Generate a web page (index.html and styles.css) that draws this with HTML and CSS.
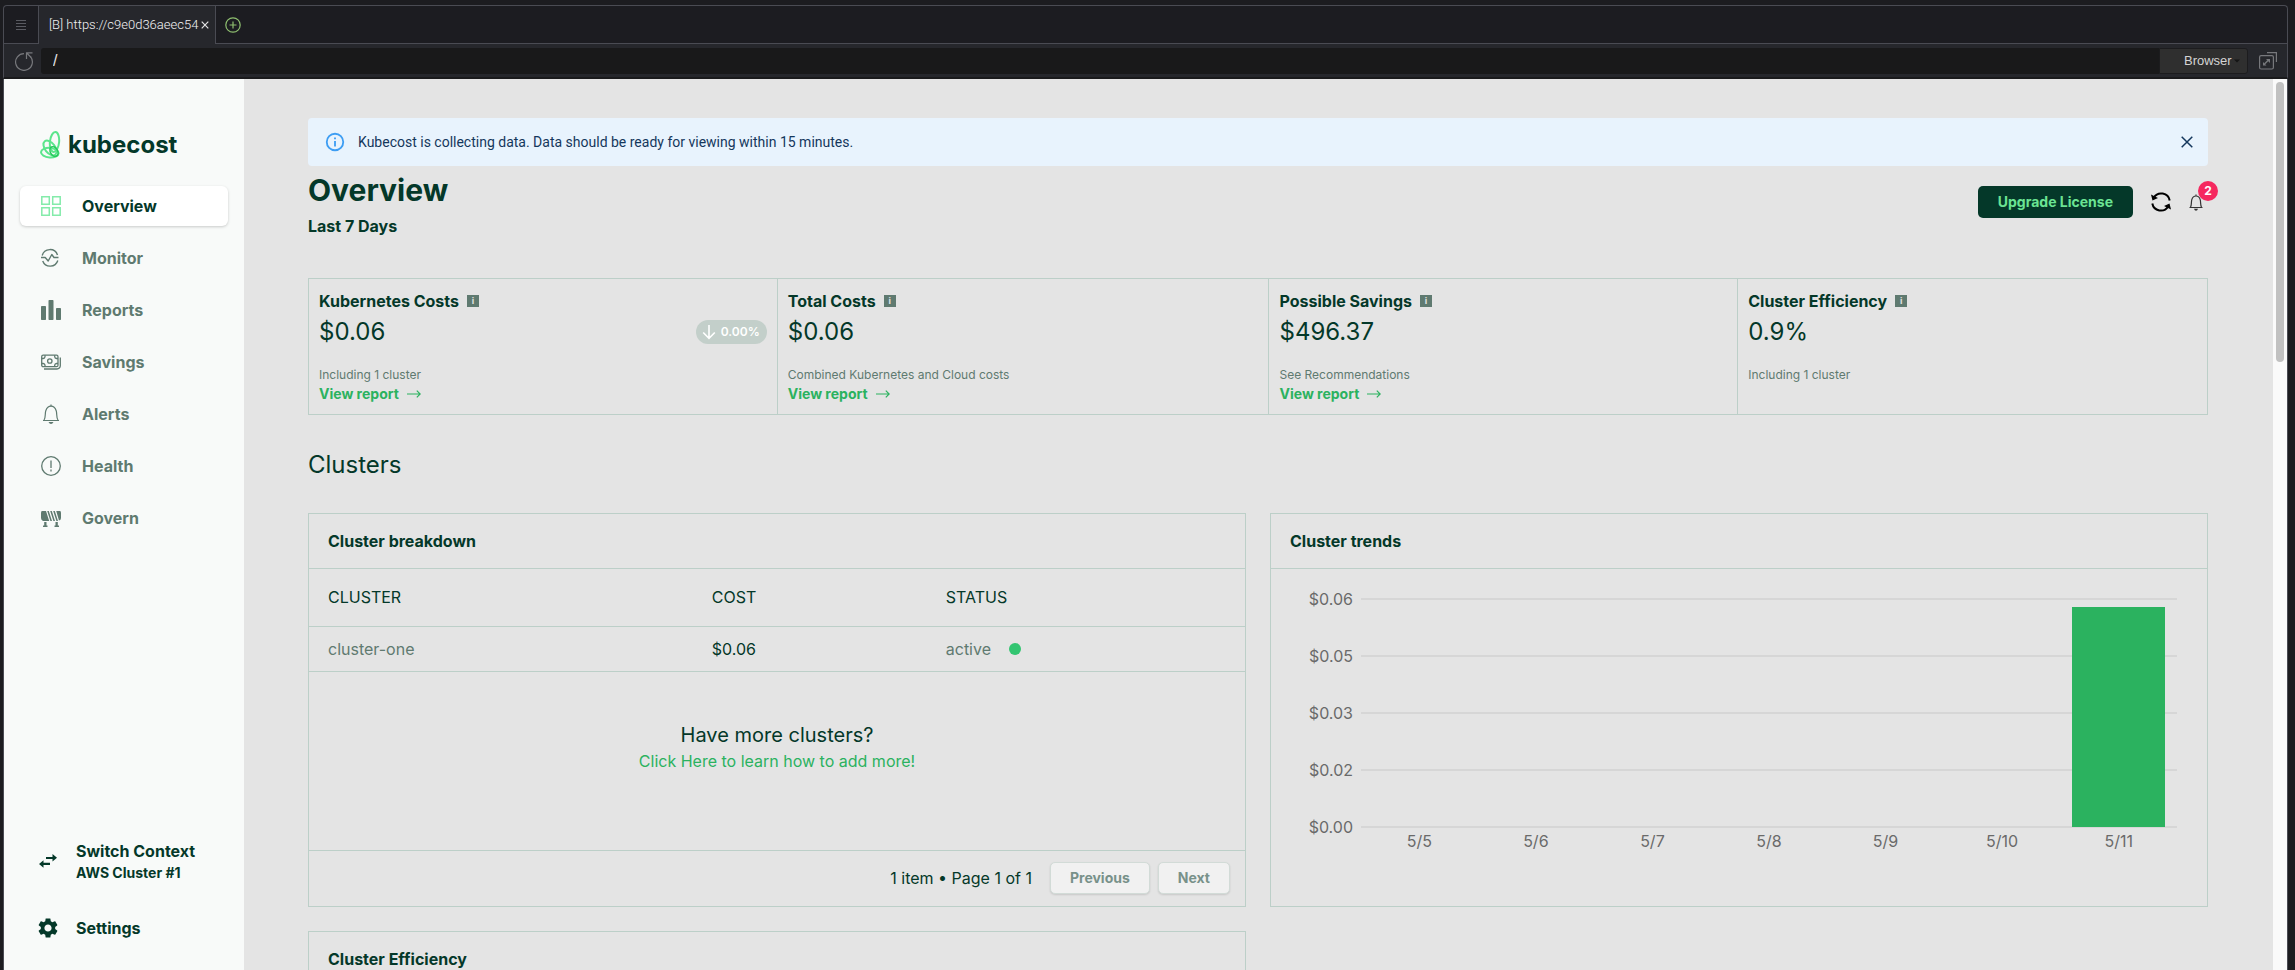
FILE: index.html
```html
<!DOCTYPE html>
<html lang="en">
<head>
<meta charset="utf-8">
<title>Kubecost Overview</title>
<link rel="stylesheet" href="styles.css">
</head>
<body>
<div class="window">
  <header class="tabbar">
    <button class="tab-menu" aria-label="Menu"><svg width="10" height="10" viewBox="0 0 10 10"><path d="M0 .5h10M0 3.500h10M0 6.500h10M0 9.500h10" stroke="#5a5b62"/></svg></button>
    <div class="tab"><span>[B] https://c9e0d36aeec54</span><button class="tab-close" aria-label="Close tab"><svg width="8" height="8" viewBox="0 0 8 8"><path d="M.7.700l6.600 6.600M7.300.7.700 7.300" stroke="#e2e2e4" stroke-width="1.200"/></svg></button></div>
    <button class="tab-add" aria-label="New tab"><svg width="16" height="16" viewBox="0 0 16 16" fill="none" stroke="#8fbf70" stroke-width="1.200"><circle cx="8" cy="8" r="7.200"/><path d="M8 4.500v7M4.500 8h7"/></svg></button>
  </header>
  <div class="toolbar">
    <button class="reload" aria-label="Reload"><svg width="20" height="20" viewBox="0 0 20 20" fill="none" stroke="#77787c" stroke-width="1.200"><path d="M10 2.600A8.400 8.400 0 1 0 16.500 5.700"/><path d="M12.500 8V1.800h6M12.700 2l4.500 4.500"/></svg></button>
    <input class="url" type="text" value="/" aria-label="Address">
    <div class="mode-wrap"><select class="mode" aria-label="Mode"><option>Browser</option></select><svg width="6" height="4" viewBox="0 0 6 4"><path d="M0 .5h6L3 3.500z" fill="#151515"/></svg></div>
    <button class="popout" aria-label="Open in new window"><svg width="18" height="18" viewBox="0 0 18 18" fill="none" stroke="#77787c" stroke-width="1.200"><rect x=".6" y="3.600" width="13.800" height="13.400" rx="1.500"/><path d="M8 .6h9.400v9.400"/><path d="M5.500 12l4-4" stroke-width="1.500"/><path d="M7 7h4v4zM4 10v3.500h3.500z" fill="#77787c" stroke="none"/></svg></button>
  </div>
  <div class="viewport">
    <aside class="sidebar">
      <a class="logo" href="#">
        <svg width="21" height="28" viewBox="0 0 21 28" fill="none" stroke="#5be58c" stroke-width="2"><ellipse cx="14.500" cy="11" rx="4.600" ry="10" transform="rotate(6 14.500 11)"/><ellipse cx="10" cy="17" rx="5" ry="8.500" transform="rotate(-38 10 17)"/><ellipse cx="9.800" cy="21.700" rx="4.800" ry="8.800" transform="rotate(-86 9.800 21.700)"/><ellipse cx="14" cy="20.500" rx="3.600" ry="5.200" transform="rotate(-30 14 20.500)" stroke="#27c95c" stroke-width="1.500"/></svg>
        <span>kubecost</span>
      </a>
      <nav class="nav">
        <a class="nav-item active" href="#"><svg width="20" height="20" viewBox="0 0 20 20" fill="none" stroke="#84ebaa" stroke-width="1.500"><path d="M.8.800h7.500v7.500H.800zM11.700.800h7.500v7.500h-7.500zM.8 11.700h7.500v7.500H.800zM11.700 11.700h7.500v7.500h-7.500z"/></svg>Overview</a>
        <a class="nav-item" href="#"><svg width="20" height="20" viewBox="0 0 20 20" fill="none" stroke="currentColor" stroke-width="1.400" stroke-linejoin="round"><path d="M1.200 7.500A8 8 0 0 1 16.500 7M16.800 12.500A8 8 0 0 1 1.700 13"/><path d="M0 9.500h4.200l3 3.500 3.600-6.500L13 9.500h4.500" /></svg>Monitor</a>
        <a class="nav-item" href="#"><svg width="20" height="20" viewBox="0 0 20 20" fill="currentColor"><rect y="6" width="5" height="14" rx=".7"/><rect x="7.500" width="5" height="20" rx=".7"/><rect x="15" y="8" width="5" height="12" rx=".7"/></svg>Reports</a>
        <a class="nav-item" href="#"><svg width="20" height="20" viewBox="0 0 20 20" fill="none" stroke="currentColor" stroke-width="1.300"><rect x=".7" y="3.200" width="16.300" height="11.500" rx="1.500"/><path d="M3 17h13a3.300 3.300 0 0 0 3.300-3.300V5.500"/><circle cx="8.800" cy="9" r="2.200"/><path d="M.7 6.500h1.500A2 2 0 0 0 4 4.700V3.200M17 6.500h-1.500a2 2 0 0 1-1.800-1.800V3.200M.7 11.500h1.500A2 2 0 0 1 4 13.200v1.500M17 11.500h-1.500a2 2 0 0 0-1.800 1.700v1.500"/></svg>Savings</a>
        <a class="nav-item" href="#"><svg width="20" height="20" viewBox="0 0 20 20" fill="none" stroke="currentColor" stroke-width="1.200"><path d="M2 16.500h16M3 16.200c1.800-2 .8-6.200 1.800-9.500C5.800 3.800 7.500 2.200 10 2.200s4.200 1.600 5.200 4.500c1 3.300 0 7.500 1.800 9.500"/><path d="M10 .5v1.700"/><path d="M7.500 18h5q-1 2-2.500 2t-2.500-2z" fill="currentColor" stroke="none"/></svg>Alerts</a>
        <a class="nav-item" href="#"><svg width="20" height="20" viewBox="0 0 20 20" fill="none" stroke="currentColor" stroke-width="1.300"><circle cx="10" cy="10" r="9.300"/><path d="M10 4.500v7.500M10 13.500v2"/></svg>Health</a>
        <a class="nav-item" href="#"><svg width="20" height="20" viewBox="0 0 20 20" fill="currentColor"><path d="M1 3h4l3.200 10H2Q0 12 0 10V5Q0 3 1 3zM6.200 3h1.600l3.200 10H9.400zM9.200 3h1.600L14 13h-1.600zM12.200 3h1.600L17 13h-1.600zM15.200 3H19q1 0 1 2v5q0 2-2 2.500z"/><path d="M3.200 14h2.300v3.500h1V19H2v-1.500h1.200zM14.500 14h2.300v3.500H18V19h-4.500v-1.500h1z"/></svg>Govern</a>
      </nav>
      <div class="side-bottom">
        <a class="side-link" href="#"><svg width="20" height="20" viewBox="0 0 20 20" fill="currentColor"><path d="M8 5.900h6.500V3L19 6.800l-4.500 3.800V7.900H8zM12 11.800H5.500V9.300L1 13l4.500 3.800v-2.900H12z"/></svg><span>Switch Context<small>AWS Cluster #1</small></span></a>
        <a class="side-link" href="#"><svg width="20" height="20" viewBox="2 2 20 20" fill="currentColor"><path d="M19.140 12.940c.04-.3.060-.61.060-.94 0-.32-.02-.64-.07-.94l2.030-1.580c.18-.14.230-.41.120-.61l-1.920-3.320c-.12-.22-.37-.29-.59-.22l-2.390.960c-.5-.38-1.030-.7-1.620-.94l-.36-2.540c-.04-.24-.24-.41-.48-.41h-3.840c-.24 0-.43.170-.47.410l-.36 2.540c-.59.240-1.130.57-1.620.94l-2.390-.96c-.22-.08-.47 0-.59.220L2.740 8.870c-.12.210-.08.470.12.610l2.030 1.580c-.05.300-.09.630-.09.940s.02.640.07.940l-2.030 1.580c-.18.140-.23.410-.12.610l1.920 3.320c.12.220.37.290.59.220l2.390-.96c.5.380 1.030.7 1.620.94l.36 2.540c.05.240.24.410.48.410h3.840c.24 0 .44-.17.47-.41l.36-2.540c.59-.24 1.130-.56 1.620-.94l2.390.960c.22.080.47 0 .59-.22l1.920-3.320c.12-.22.070-.47-.12-.61l-2.010-1.580zM12 15.600c-1.980 0-3.600-1.620-3.600-3.600s1.620-3.600 3.600-3.600 3.600 1.620 3.600 3.600-1.620 3.600-3.600 3.600z"/></svg><span>Settings</span></a>
      </div>
    </aside>
    <main class="main">
      <div class="alert" role="alert">
        <svg width="22" height="22" viewBox="0 0 24 24" fill="#3d9df3"><path d="M11 7h2v2h-2zm0 4h2v6h-2zm1-9a10 10 0 1 0 0 20 10 10 0 0 0 0-20zm0 18a8 8 0 1 1 0-16 8 8 0 0 1 0 16z"/></svg>
        <p>Kubecost is collecting data. Data should be ready for viewing within 15 minutes.</p>
        <button class="alert-close" aria-label="Close"><svg width="12" height="12" viewBox="0 0 12 12"><path d="M.7.700l10.600 10.600M11.300.7.700 11.300" stroke="#14375c" stroke-width="1.500"/></svg></button>
      </div>
      <div class="page-head">
        <div>
          <h1>Overview</h1>
          <p class="range">Last 7 Days</p>
        </div>
        <div class="actions">
          <button class="upgrade">Upgrade License</button>
          <button class="icon-btn" aria-label="Refresh"><svg width="20" height="20" viewBox="0 0 20 20" fill="none" stroke="#000" stroke-width="2"><path d="M2.800 5.500A8.700 8.700 0 0 1 18.700 8.500M17.200 14.500A8.700 8.700 0 0 1 1.300 11.500"/><path d="M0 2.500l1.500 6 5.500-2.500zM20 17.500l-1.500-6L13 14z" fill="#000" stroke="none"/></svg></button>
          <button class="icon-btn bell" aria-label="Notifications"><svg width="14" height="17" viewBox="0 0 14 17" fill="none" stroke="#333" stroke-width="1.200"><path d="M.5 13.500h13M1.500 13.200c1.200-1.500.6-5 1.300-7.500C3.500 3.300 5 2 7 2s3.500 1.300 4.200 3.700c.7 2.500.1 6 1.300 7.500M7 .5V2"/><path d="M5 14.800h4q-.6 2-2 2t-2-2z" fill="#333" stroke="none"/></svg><span class="badge">2</span></button>
        </div>
      </div>
      <section class="stats">
        <article class="stat">
          <h2>Kubernetes Costs <span class="info">i</span></h2>
          <div class="value"><span>$0.06</span><span class="pill"><svg width="14" height="16" viewBox="0 0 14 16" fill="none" stroke="#fff" stroke-width="1.600"><path d="M7 1v13M1.200 8.500 7 14.300l5.800-5.800"/></svg>0.00%</span></div>
          <p>Including 1 cluster</p>
          <a href="#">View report <svg width="14" height="8" viewBox="0 0 14 8" fill="none" stroke="currentColor" stroke-width="1.200"><path d="M0 4h13M9.800.6 13.200 4 9.800 7.400"/></svg></a>
        </article>
        <article class="stat">
          <h2>Total Costs <span class="info">i</span></h2>
          <div class="value"><span>$0.06</span></div>
          <p>Combined Kubernetes and Cloud costs</p>
          <a href="#">View report <svg width="14" height="8" viewBox="0 0 14 8" fill="none" stroke="currentColor" stroke-width="1.200"><path d="M0 4h13M9.800.6 13.200 4 9.800 7.400"/></svg></a>
        </article>
        <article class="stat">
          <h2>Possible Savings <span class="info">i</span></h2>
          <div class="value"><span>$496.37</span></div>
          <p>See Recommendations</p>
          <a href="#">View report <svg width="14" height="8" viewBox="0 0 14 8" fill="none" stroke="currentColor" stroke-width="1.200"><path d="M0 4h13M9.800.6 13.200 4 9.800 7.400"/></svg></a>
        </article>
        <article class="stat">
          <h2>Cluster Efficiency <span class="info">i</span></h2>
          <div class="value"><span>0.9%</span></div>
          <p>Including 1 cluster</p>
        </article>
      </section>
      <h2 class="section-title">Clusters</h2>
      <div class="cards">
        <section class="card">
          <h3>Cluster breakdown</h3>
          <table class="clusters">
            <thead><tr><th class="c-name">CLUSTER</th><th class="c-cost">COST</th><th>STATUS</th></tr></thead>
            <tbody><tr><td>cluster-one</td><td class="cost">$0.06</td><td><span class="status">active<i class="dot"></i></span></td></tr></tbody>
          </table>
          <div class="more"><p>Have more clusters?</p><a href="#">Click Here to learn how to add more!</a></div>
          <footer class="pager"><span>1 item • Page 1 of 1</span><button disabled>Previous</button><button disabled>Next</button></footer>
        </section>
        <section class="card">
          <h3>Cluster trends</h3>
          <div class="chart">
            <div class="scale">
              <div class="tick"><span>$0.06</span></div>
              <div class="tick"><span>$0.05</span></div>
              <div class="tick"><span>$0.03</span></div>
              <div class="tick"><span>$0.02</span></div>
              <div class="tick"><span>$0.00</span></div>
            </div>
            <div class="bars"><div class="bar" style="height:96.500%"></div></div>
            <div class="days"><span>5/5</span><span>5/6</span><span>5/7</span><span>5/8</span><span>5/9</span><span>5/10</span><span>5/11</span></div>
          </div>
        </section>
        <section class="card">
          <h3>Cluster Efficiency</h3>
        </section>
      </div>
    </main>
    <div class="scrollbar"><div class="thumb"></div></div>
  </div>
</div>
</body>
</html>
```

FILE: styles.css
```css
* { box-sizing: border-box; }
body { margin: 0; background: #1c1c20; color: #043829; font-family: Inter, "Liberation Sans", sans-serif; font-size: 16px; line-height: 24px; }
h1, h2, h3, p { margin: 0; font-size: 16px; }
a { color: inherit; text-decoration: none; }
button, input, select { font: inherit; color: inherit; border: 0; padding: 0; margin: 0; background: none; }
svg { display: block; flex: none; }

.window { height: 100vh; padding: 5px 7px 0 3px; display: flex; flex-direction: column; overflow: hidden; }
.tabbar { display: flex; height: 39px; flex: none; border: 1px solid #4a4b53; border-bottom: 0; border-radius: 4px 4px 0 0; background: #1c1c21; }
.tab-menu { width: 35px; border-right: 1px solid #4a4b53; border-bottom: 1px solid #4a4b53; display: flex; align-items: center; justify-content: center; }
.tab { width: 177px; display: flex; align-items: center; gap: 3px; padding-left: 10px; border-right: 1px solid #4a4b53; background: #26272c; font: 300 13px/20px Roboto, sans-serif; color: #f2f2f4; white-space: nowrap; }
.tab-add { flex: 1; border-bottom: 1px solid #4a4b53; padding-left: 9px; }
.toolbar { display: flex; align-items: center; height: 35px; flex: none; border: 1px solid #4a4b53; border-width: 0 1px; border-bottom: 2px solid #1a1a1c; background: #26272c; font-family: "Liberation Sans", Arial, sans-serif; }
.reload { width: 37px; padding-left: 10px; }
.url { flex: 1; height: 26px; padding: 0 12px; border-radius: 3px 0 0 3px; background: #19191a; color: #e2e2e4; }
.mode-wrap { display: grid; align-items: center; }
.mode-wrap > * { grid-area: 1 / 1; }
.mode-wrap svg { justify-self: end; margin-right: 8px; pointer-events: none; }
.mode { width: 89px; height: 26px; padding: 0 8px 0 24px; border: 1px solid #1c1c1e; border-radius: 0 3px 3px 0; background: #2f2f2f; color: #d4d4d4; font-size: 13px; appearance: none; }
.popout { width: 39px; padding-left: 11px; }

.viewport { flex: 1; min-height: 0; display: flex; border: 1px solid #4a4b53; border-width: 0 1px; }
.sidebar { width: 240px; flex: none; display: flex; flex-direction: column; padding: 48px 16px 30px; background: #f8faf9; font-weight: 700; }
.logo { display: flex; align-items: center; gap: 7px; margin-left: 20px; height: 36px; font-size: 24px; }
.nav { display: grid; gap: 12px; margin-top: 23px; }
.nav-item { display: flex; align-items: center; gap: 21px; height: 40px; padding-left: 21px; border-radius: 6px; color: #5f7a70; }
.nav-item.active { background: #fff; color: #043829; box-shadow: 0 1px 3px #00000030; }
.side-bottom { margin-top: auto; display: grid; gap: 33px; }
.side-link { display: flex; align-items: center; gap: 18px; padding-left: 18px; }
.side-link small { display: block; font-size: 14px; line-height: 20px; }

.main { flex: 1; min-width: 0; overflow: hidden; padding: 39px 65px 0 64px; background: #e4e4e4; }
.alert { display: flex; align-items: center; height: 48px; padding: 0 15px 0 16px; gap: 12px; border-radius: 4px; background: #e8f3fd; color: #14375c; font-family: Roboto, sans-serif; }
.alert p { flex: 1; font-size: 14px; }
.page-head { display: flex; justify-content: space-between; padding-top: 4px; height: 112px; }
h1 { font-size: 30px; line-height: 40px; }
.range { font-weight: 700; margin-top: 4px; }
.actions { display: flex; align-items: center; height: 64px; gap: 18px; padding-right: 5px; }
.upgrade { height: 32px; padding: 0 20px; border-radius: 5px; background: #043829; color: #6be493; font-size: 14px; font-weight: 700; }
.bell { position: relative; }
.badge { position: absolute; left: 9px; top: -13px; width: 20px; height: 20px; border-radius: 50%; background: #f5285f; color: #fff; font: 700 12px/20px Inter, sans-serif; text-align: center; }

.stats { display: grid; grid-template-columns: 468fr 492fr 469fr 470fr; min-height: 137px; border: 1px solid #bccfc8; }
.stat { padding: 10px; border-left: 1px solid #bccfc8; }
.stat:first-child { border-left: 0; }
.stat h2 { display: flex; align-items: center; gap: 8px; }
.info { width: 12px; height: 12px; background: #5f7a70; color: #e4e4e4; font-size: 9px; line-height: 12px; text-align: center; }
.value { display: flex; align-items: center; justify-content: space-between; height: 38px; font-size: 24px; }
.pill { display: flex; align-items: center; gap: 5px; height: 24px; padding: 0 7px 0 6px; border-radius: 12px; background: #c3cfca; color: #fff; font-size: 12px; font-weight: 600; }
.stat p { margin-top: 14px; font-size: 12px; line-height: 20px; color: #5f7a70; }
.stat a { display: flex; align-items: center; gap: 8px; font-size: 14px; line-height: 18px; font-weight: 700; color: #2bb25f; }
.section-title { margin: 35px 0 33px; font-size: 24px; line-height: 30px; font-weight: 400; }

.cards { display: grid; grid-template-columns: 1fr 1fr; gap: 24px; }
.card { border: 1px solid #bccfc8; }
.card h3 { height: 55px; padding: 15px 19px; border-bottom: 1px solid #bccfc8; }
.clusters { width: 100%; border-collapse: collapse; text-align: left; table-layout: fixed; }
.clusters th, .clusters td { padding: 0 19px; border-bottom: 1px solid #bccfc8; font-weight: 400; }
.clusters th { height: 57px; }
.clusters td { height: 45px; color: #5f7a70; }
.clusters td.cost { color: #043829; }
.c-name { width: 41%; }
.c-cost { width: 25%; }
.status { display: flex; align-items: center; gap: 18px; }
.dot { width: 12px; height: 12px; border-radius: 50%; background: #33c571; }
.more { height: 178px; padding-top: 49px; text-align: center; }
.more p { font-size: 20px; line-height: 28px; }
.more a { color: #2bb25f; }
.pager { display: flex; align-items: center; justify-content: flex-end; gap: 8px; height: 56px; padding: 0 15px; border-top: 1px solid #bccfc8; }
.pager span { margin-right: 10px; }
.pager button { height: 32px; padding: 0 19px; border: 1px solid #d2dbd7; border-radius: 5px; background: #f1f1f1; color: #78918a; font-size: 14px; font-weight: 700; box-shadow: 0 1px 2px #00000020; }

.chart { display: grid; grid-template-columns: 90px 1fr 30px; padding-top: 1px; color: #6a6a6a; }
.scale { grid-area: 1 / 1 / 2 / 3; }
.tick { display: flex; align-items: center; gap: 8px; height: 57px; }
.tick span { width: 82px; text-align: right; }
.tick::after { content: ""; flex: 1; height: 2px; background: #d6d6d6; }
.bars { grid-area: 1 / 2 / 2 / 3; display: grid; grid-template-columns: repeat(7, 1fr); align-items: end; margin: 29px 0 28px; z-index: 1; }
.bar { grid-column: 7; margin: 0 10%; background: #2bb25f; }
.days { grid-area: 2 / 2 / 3 / 3; display: grid; grid-template-columns: repeat(7, 1fr); margin-top: -28px; text-align: center; }
.days span { line-height: 28px; }

.scrollbar { width: 14px; flex: none; padding: 3px; background: #fafafa; }
.thumb { height: 280px; border-radius: 4px; background: #c1c1c1; }
```
